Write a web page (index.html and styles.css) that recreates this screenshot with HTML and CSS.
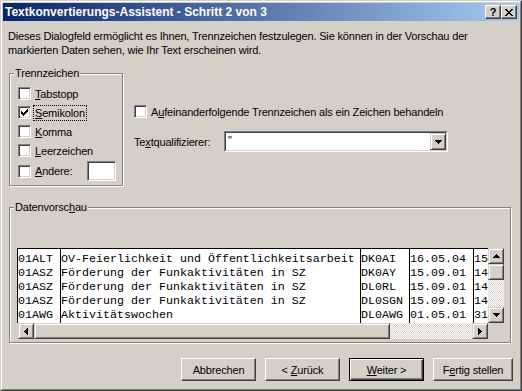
FILE: index.html
```html
<!DOCTYPE html>
<html lang="de">
<head>
<meta charset="utf-8">
<title>Textkonvertierungs-Assistent</title>
<link rel="stylesheet" href="styles.css">
</head>
<body>
<div class="window">
  <div class="frame">
    <div class="titlebar">
      <span class="title">Textkonvertierungs-Assistent - Schritt 2 von 3</span>
      <div class="tbuttons">
        <span class="tbtn help">?</span>
        <span class="tbtn close">
          <svg width="8" height="7" viewBox="0 0 8 7"><path d="M0 0h2v1H0zM6 0h2v1H6zM1 1h2v1H1zM5 1h2v1H5zM2 2h4v1H2zM3 3h2v1H3zM2 4h4v1H2zM1 5h2v1H1zM5 5h2v1H5zM0 6h2v1H0zM6 6h2v1H6z" fill="#000"/></svg>
        </span>
      </div>
    </div>
    <div class="content">
      <p class="intro">Dieses Dialogfeld ermöglicht es Ihnen, Trennzeichen festzulegen. Sie können in der Vorschau der<br>markierten Daten sehen, wie Ihr Text erscheinen wird.</p>

      <div class="options">
        <div class="group delim">
          <div class="group-title">Trennzeichen</div>
          <div class="rows">
            <div class="cb-row"><span class="cb"></span><span class="lbl"><u>T</u>abstopp</span></div>
            <div class="cb-row"><span class="cb"><svg width="11" height="11" viewBox="0 0 11 11"><path d="M2 4h1v1h1v1h1v-1h1v-1h1v-1h1v-1h1v3h-1v1h-1v1h-1v1h-1v1h-1v-1h-1v-1h-1z" fill="#000"/></svg></span><span class="lbl focus"><u>S</u>emikolon</span></div>
            <div class="cb-row"><span class="cb"></span><span class="lbl"><u>K</u>omma</span></div>
            <div class="cb-row"><span class="cb"></span><span class="lbl"><u>L</u>eerzeichen</span></div>
            <div class="cb-row other"><span class="cb"></span><span class="lbl lbl-other"><u>A</u>ndere:</span><span class="textbox"></span></div>
          </div>
        </div>

        <div class="rightopts">
          <div class="cb-row"><span class="cb"></span><span class="lbl">A<u>u</u>feinanderfolgende Trennzeichen als ein Zeichen behandeln</span></div>
          <div class="qual-row">
            <span class="qual-label">Te<u>x</u>tqualifizierer:</span>
            <div class="combo">
              <div class="combo-in">
                <span class="combo-val">"</span>
                <span class="raised combo-btn"><svg width="7" height="4" viewBox="0 0 7 4"><path d="M0 0h7v1h-1v1h-1v1h-1v1h-1v-1h-1v-1h-1v-1h-1z" fill="#000"/></svg></span>
              </div>
            </div>
          </div>
        </div>
      </div>

      <div class="group preview-group">
        <div class="group-title">Datenvorsc<u>h</u>au</div>
        <div class="preview">
          <div class="data">
            <div class="col c1"><div>01ALT</div><div>01ASZ</div><div>01ASZ</div><div>01ASZ</div><div>01AWG</div></div>
            <div class="col c2"><div>OV-Feierlichkeit und Öffentlichkeitsarbeit</div><div>Förderung der Funkaktivitäten in SZ</div><div>Förderung der Funkaktivitäten in SZ</div><div>Förderung der Funkaktivitäten in SZ</div><div>Aktivitätswochen</div></div>
            <div class="col c3"><div>DK0AI</div><div>DK0AY</div><div>DL0RL</div><div>DL0SGN</div><div>DL0AWG</div></div>
            <div class="col c4"><div>16.05.04</div><div>15.09.01</div><div>15.09.01</div><div>15.09.01</div><div>01.05.01</div></div>
            <div class="col c5"><div>15</div><div>14</div><div>14</div><div>14</div><div>31</div></div>
          </div>
          <div class="vscroll">
            <span class="raised sbtn"><svg width="7" height="4" viewBox="0 0 7 4"><path d="M3 0h1v1h1v1h1v1h1v1H0v-1h1v-1h1v-1h1z" fill="#000"/></svg></span>
            <span class="raised vthumb"></span>
            <span class="track"></span>
            <span class="raised sbtn"><svg width="7" height="4" viewBox="0 0 7 4"><path d="M0 0h7v1h-1v1h-1v1h-1v1h-1v-1h-1v-1h-1v-1h-1z" fill="#000"/></svg></span>
          </div>
          <div class="hscroll">
            <span class="raised sbtn"><svg width="4" height="7" viewBox="0 0 4 7"><path d="M3 0h1v7h-1v-1h-1v-1h-1v-1h-1v-1h1v-1h1v-1h1z" fill="#000"/></svg></span>
            <span class="raised hthumb"></span>
            <span class="track"></span>
            <span class="raised sbtn"><svg width="4" height="7" viewBox="0 0 4 7"><path d="M0 0h1v1h1v1h1v1h1v1h-1v1h-1v1h-1v1h-1z" fill="#000"/></svg></span>
          </div>
          <div class="corner"></div>
        </div>
      </div>

      <div class="buttons">
        <span class="btn"><span>Abbrechen</span></span>
        <span class="btn"><span>&lt; <u>Z</u>urück</span></span>
        <span class="btn default"><span><u>W</u>eiter &gt;</span></span>
        <span class="btn wide"><span>F<u>e</u>rtig stellen</span></span>
      </div>
    </div>
  </div>
</div>
</body>
</html>
```

FILE: styles.css
```css
* { box-sizing: border-box; }
html, body { margin: 0; padding: 0; background: #D4D0C8; }
body {
  font-family: "Liberation Sans", Arial, sans-serif;
  font-size: 11px;
  letter-spacing: -0.17px;
  color: #000;
}
u { text-decoration: underline; text-underline-offset: 1px; }

.window {
  width: 522px;
  height: 391px;
  background: #D4D0C8;
  border: 1px solid;
  border-color: #D4D0C8 #404040 #404040 #D4D0C8;
}
.frame {
  height: 100%;
  border: 1px solid;
  border-color: #fff #808080 #808080 #fff;
  padding: 1px;
  display: flex;
  flex-direction: column;
}

.titlebar {
  height: 18px;
  flex: none;
  display: flex;
  align-items: center;
  justify-content: space-between;
  padding: 0 2px 0 2px;
  background: linear-gradient(to right, #0A246A, #A6CAF0);
}
.title {
  color: #fff;
  font-weight: bold;
  font-size: 12px;
  letter-spacing: 0;
  line-height: 14px;
  white-space: nowrap;
}
.tbuttons { display: flex; }
.tbtn {
  width: 16px;
  height: 14px;
  display: flex;
  align-items: center;
  justify-content: center;
  background: #D4D0C8;
  border: 1px solid;
  border-color: #fff #404040 #404040 #fff;
  box-shadow: inset -1px -1px #808080;
}
.tbtn.help {
  font-weight: bold;
  font-size: 11px;
  letter-spacing: 0;
  line-height: 12px;
}

.raised {
  display: flex;
  align-items: center;
  justify-content: center;
  background: #D4D0C8;
  border: 1px solid;
  border-color: #D4D0C8 #404040 #404040 #D4D0C8;
  box-shadow: inset 1px 1px #fff, inset -1px -1px #808080;
}

.content {
  flex: 1;
  display: flex;
  flex-direction: column;
}
.intro {
  margin: 8px 0 0 5px;
  line-height: 14px;
  white-space: nowrap;
}

.options {
  display: flex;
  margin-top: 16px;
  padding-left: 6px;
}
.group {
  border: 1px solid #808080;
  box-shadow: inset 1px 1px #fff, 1px 1px #fff;
}
.group-title {
  margin: -7px 0 0 4px;
  padding: 0 1px;
  background: #D4D0C8;
  line-height: 13px;
  width: max-content;
}
.delim {
  width: 114px;
  height: 113px;
  flex: none;
}
.rows { padding: 4px 0 0 8px; }

.cb-row {
  display: flex;
  align-items: center;
  height: 19px;
  white-space: nowrap;
}
.cb-row.other { height: 22px; }
.cb {
  width: 13px;
  height: 13px;
  flex: none;
  background: #fff;
  border: 1px solid;
  border-color: #808080 #fff #fff #808080;
  box-shadow: inset 1px 1px #404040, inset -1px -1px #D4D0C8;
}
.cb svg { display: block; }
.lbl {
  margin-left: 2px;
  padding: 0 1px;
  border: 1px dotted transparent;
  line-height: 14px;
}
.lbl.focus { border-color: #000; }
.lbl-other { width: 52px; }
.textbox {
  width: 29px;
  height: 20px;
  margin-left: 2px;
  background: #fff;
  border: 1px solid;
  border-color: #808080 #fff #fff #808080;
  box-shadow: inset 1px 1px #404040, inset -1px -1px #D4D0C8;
}

.rightopts {
  margin-left: 11px;
  padding-top: 29px;
}
.qual-row {
  display: flex;
  align-items: center;
  margin-top: 10px;
  height: 21px;
}
.qual-label { width: 90px; flex: none; }
.combo {
  width: 224px;
  height: 21px;
  border: 1px solid;
  border-color: #808080 #fff #fff #808080;
}
.combo-in {
  height: 100%;
  display: flex;
  background: #fff;
  border: 1px solid;
  border-color: #404040 #D4D0C8 #D4D0C8 #404040;
}
.combo-val {
  flex: 1;
  padding-left: 2px;
  line-height: 15px;
}
.combo-btn {
  width: 16px;
  height: 100%;
}

.preview-group {
  margin: 21px 0 0 6px;
  width: 502px;
  height: 136px;
  flex: none;
}
.preview {
  margin: 34px 0 0 7px;
  width: 487px;
  display: grid;
  grid-template-columns: 471px 16px;
  grid-template-rows: 75px 16px;
}
.data {
  background: #fff;
  border-top: 1px solid #000;
  border-left: 1px solid #000;
  display: flex;
  overflow: hidden;
  font-family: "Liberation Mono", "Courier New", monospace;
  font-size: 11.67px;
  letter-spacing: 0;
}
.col {
  flex: none;
  padding-top: 3px;
  border-right: 1px solid #000;
  overflow: hidden;
}
.col div {
  height: 14px;
  line-height: 14px;
  white-space: pre;
}
.c1 { width: 43px; }
.c2 { width: 300px; }
.c3 { width: 49px; }
.c4 { width: 64px; }
.c5 { flex: 1; border-right: 0; }

.vscroll {
  display: flex;
  flex-direction: column;
}
.sbtn { width: 16px; height: 16px; flex: none; }
.vthumb { width: 16px; height: 16px; flex: none; }
.track {
  flex: 1;
  background-color: #fff;
  background-image: repeating-conic-gradient(#fff 0% 25%, #D4D0C8 0% 50%);
  background-size: 2px 2px;
}
.hscroll {
  display: flex;
  margin-left: 1px;
}
.hthumb { width: 356px; height: 16px; flex: none; }
.corner { background: #D4D0C8; }

.buttons {
  display: flex;
  justify-content: flex-end;
  gap: 9px;
  margin-top: 15px;
  padding-right: 6px;
}
.btn {
  width: 75px;
  height: 23px;
  display: flex;
  align-items: center;
  justify-content: center;
  background: #D4D0C8;
  border: 1px solid;
  border-color: #fff #404040 #404040 #fff;
  box-shadow: inset -1px -1px #808080;
  white-space: pre;
}
.btn.wide { width: 80px; }
.btn.default {
  border: 1px solid #000;
  box-shadow: inset 1px 1px #fff, inset -1px -1px #404040, inset -2px -2px #808080;
}
```
